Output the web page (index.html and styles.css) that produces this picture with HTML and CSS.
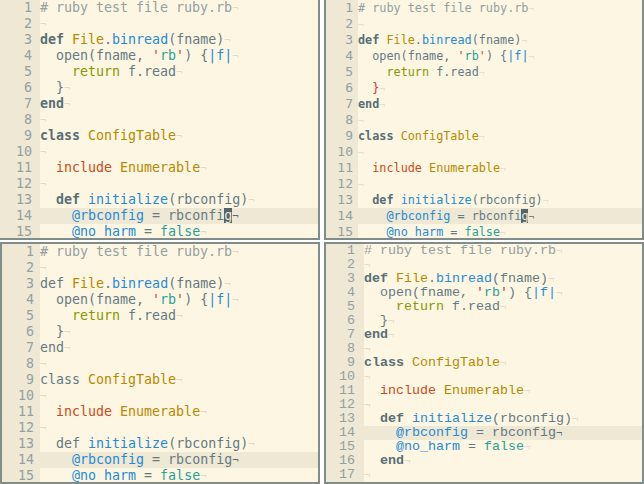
FILE: index.html
```html
<!DOCTYPE html>
<html>
<head>
<meta charset="utf-8">
<link rel="stylesheet" href="styles.css">
</head>
<body>
<div class="grid">
  <div class="pane pane-tl">
    <div class="gutter"><div>1</div><div>2</div><div>3</div><div>4</div><div>5</div><div>6</div><div>7</div><div>8</div><div>9</div><div>10</div><div>11</div><div>12</div><div>13</div><div>14</div><div>15</div></div>
    <div class="code">
      <div class="line"><span class="c"># ruby test file ruby.rb</span><span class="eol">¬</span></div>
      <div class="line"><span class="eol">¬</span></div>
      <div class="line"><span class="k">def</span> <span class="t">File</span>.<span class="f">binread</span>(fname)<span class="eol">¬</span></div>
      <div class="line">  open(fname, <span class="q">'</span><span class="s">rb</span><span class="q">'</span>) {<span class="f">|f|</span><span class="eol">¬</span></div>
      <div class="line">    <span class="r">return</span> f.read<span class="eol">¬</span></div>
      <div class="line">  }<span class="eol">¬</span></div>
      <div class="line"><span class="k">end</span><span class="eol">¬</span></div>
      <div class="line"><span class="eol">¬</span></div>
      <div class="line"><span class="k">class</span> <span class="t">ConfigTable</span><span class="eol">¬</span></div>
      <div class="line"><span class="eol">¬</span></div>
      <div class="line">  <span class="i">include</span> <span class="t">Enumerable</span><span class="eol">¬</span></div>
      <div class="line"><span class="eol">¬</span></div>
      <div class="line">  <span class="k">def</span> <span class="f">initialize</span>(rbconfig)<span class="eol">¬</span></div>
      <div class="line cur">    <span class="f">@rbconfig</span> = rbconfi<span class="cursor">g</span><span class="eol">¬</span></div>
      <div class="line">    <span class="f">@no_harm</span> = <span class="s">false</span><span class="eol">¬</span></div>
    </div>
  </div>
  <div class="pane pane-tr">
    <div class="gutter"><div>1</div><div>2</div><div>3</div><div>4</div><div>5</div><div>6</div><div>7</div><div>8</div><div>9</div><div>10</div><div>11</div><div>12</div><div>13</div><div>14</div><div>15</div></div>
    <div class="code">
      <div class="line"><span class="c"># ruby test file ruby.rb</span><span class="eol">¬</span></div>
      <div class="line"><span class="eol">¬</span></div>
      <div class="line"><span class="k">def</span> <span class="t">File</span>.<span class="f">binread</span>(fname)<span class="eol">¬</span></div>
      <div class="line">  open(fname, <span class="q">'</span><span class="s">rb</span><span class="q">'</span>) {<span class="f">|f|</span><span class="eol">¬</span></div>
      <div class="line">    <span class="r">return</span> f.read<span class="eol">¬</span></div>
      <div class="line">  <span class="q">}</span><span class="eol">¬</span></div>
      <div class="line"><span class="k">end</span><span class="eol">¬</span></div>
      <div class="line"><span class="eol">¬</span></div>
      <div class="line"><span class="k">class</span> <span class="t">ConfigTable</span><span class="eol">¬</span></div>
      <div class="line"><span class="eol">¬</span></div>
      <div class="line">  <span class="i">include</span> <span class="t">Enumerable</span><span class="eol">¬</span></div>
      <div class="line"><span class="eol">¬</span></div>
      <div class="line">  <span class="k">def</span> <span class="f">initialize</span>(rbconfig)<span class="eol">¬</span></div>
      <div class="line cur">    <span class="f">@rbconfig</span> = rbconfi<span class="cursor">g</span><span class="eol">¬</span></div>
      <div class="line">    <span class="f">@no_harm</span> = <span class="s">false</span><span class="eol">¬</span></div>
    </div>
  </div>
  <div class="pane pane-bl">
    <div class="gutter"><div>1</div><div>2</div><div>3</div><div>4</div><div>5</div><div>6</div><div>7</div><div>8</div><div>9</div><div>10</div><div>11</div><div>12</div><div>13</div><div>14</div><div>15</div></div>
    <div class="code">
      <div class="line"><span class="c"># ruby test file ruby.rb</span><span class="eol">¬</span></div>
      <div class="line"><span class="eol">¬</span></div>
      <div class="line"><span class="k">def</span> <span class="t">File</span>.<span class="f">binread</span>(fname)<span class="eol">¬</span></div>
      <div class="line">  open(fname, <span class="q">'</span><span class="s">rb</span><span class="q">'</span>) {<span class="f">|f|</span><span class="eol">¬</span></div>
      <div class="line">    <span class="r">return</span> f.read<span class="eol">¬</span></div>
      <div class="line">  }<span class="eol">¬</span></div>
      <div class="line"><span class="k">end</span><span class="eol">¬</span></div>
      <div class="line"><span class="eol">¬</span></div>
      <div class="line"><span class="k">class</span> <span class="t">ConfigTable</span><span class="eol">¬</span></div>
      <div class="line"><span class="eol">¬</span></div>
      <div class="line">  <span class="i">include</span> <span class="t">Enumerable</span><span class="eol">¬</span></div>
      <div class="line"><span class="eol">¬</span></div>
      <div class="line">  <span class="k">def</span> <span class="f">initialize</span>(rbconfig)<span class="eol">¬</span></div>
      <div class="line cur">    <span class="f">@rbconfig</span> = rbconfig<span class="eol">¬</span></div>
      <div class="line">    <span class="f">@no_harm</span> = <span class="s">false</span><span class="eol">¬</span></div>
    </div>
  </div>
  <div class="pane pane-br">
    <div class="gutter"><div>1</div><div>2</div><div>3</div><div>4</div><div>5</div><div>6</div><div>7</div><div>8</div><div>9</div><div>10</div><div>11</div><div>12</div><div>13</div><div>14</div><div>15</div><div>16</div><div>17</div></div>
    <div class="code">
      <div class="line"><span class="c"># ruby test file ruby.rb</span><span class="eol">¬</span></div>
      <div class="line"><span class="eol">¬</span></div>
      <div class="line"><span class="k">def</span> <span class="t">File</span>.<span class="f">binread</span>(fname)<span class="eol">¬</span></div>
      <div class="line">  open(fname, <span class="q">'</span><span class="s">rb</span><span class="q">'</span>) {<span class="f">|f|</span><span class="eol">¬</span></div>
      <div class="line">    <span class="r">return</span> f.read<span class="eol">¬</span></div>
      <div class="line">  }<span class="eol">¬</span></div>
      <div class="line"><span class="k">end</span><span class="eol">¬</span></div>
      <div class="line"><span class="eol">¬</span></div>
      <div class="line"><span class="k">class</span> <span class="t">ConfigTable</span><span class="eol">¬</span></div>
      <div class="line"><span class="eol">¬</span></div>
      <div class="line">  <span class="i">include</span> <span class="t">Enumerable</span><span class="eol">¬</span></div>
      <div class="line"><span class="eol">¬</span></div>
      <div class="line">  <span class="k">def</span> <span class="f">initialize</span>(rbconfig)<span class="eol">¬</span></div>
      <div class="line cur">    <span class="f">@rbconfig</span> = rbconfig<span class="eol">¬</span></div>
      <div class="line">    <span class="f">@no_harm</span> = <span class="s">false</span><span class="eol">¬</span></div>
      <div class="line">  <span class="k">end</span><span class="eol">¬</span></div>
      <div class="line"><span class="eol">¬</span></div>
    </div>
  </div>
</div>
</body>
</html>
```
FILE: styles.css
```css
html, body {
  margin: 0;
  padding: 0;
  background: #ffffff;
}
.grid {
  display: grid;
  grid-template-columns: 320px 320px;
  grid-template-rows: 240px 242px;
  column-gap: 4px;
  row-gap: 2px;
  width: 644px;
  height: 484px;
}
.pane {
  display: flex;
  overflow: hidden;
  background: #fdf6e3;
  color: #657b83;
  font-family: "DejaVu Sans Mono", monospace;
  font-size: 13.3px;
  line-height: 16px;
  border: 0 solid #818d8b;
}
.pane-tl {
  border-right-width: 2px;
  border-bottom-width: 2px;
}
.pane-tr {
  border-left-width: 2px;
  border-right-width: 2px;
  border-bottom-width: 2px;
}
.pane-bl {
  border-width: 2px;
}
.pane-br {
  border-width: 2px;
}
.gutter {
  background: #eee8d5;
  color: #93a1a1;
  text-align: right;
  flex: none;
  box-sizing: border-box;
}
.code {
  flex: 1;
  min-width: 0;
}
.line {
  height: 16px;
  white-space: pre;
}
.gutter > div {
  height: 16px;
}
.pane-tl .gutter { width: 40px; padding-right: 8px; }
.pane-bl .gutter { width: 38px; padding-right: 6px; }
.pane-tr .gutter { width: 32px; padding-right: 5px; }
.pane-tr { font-size: 11.8px; }
.pane-tr .gutter { font-size: 13px; }
.pane-br { font-family: "Liberation Mono", monospace; font-size: 13.33px; line-height: 14px; }
.pane-br .line, .pane-br .gutter > div { height: 14px; }
.pane-br .gutter { width: 38px; padding-right: 9px; }

.cur { background: #eee8d5; }
.c { color: #93a1a1; }
.k { color: #586e75; font-weight: bold; }
.pane-bl .k { font-weight: normal; color: #657b83; }
.t { color: #b58900; }
.f { color: #268bd2; }
.s { color: #2aa198; }
.q { color: #dc322f; }
.r { color: #859900; }
.i { color: #cb4b16; }
.eol { color: #e2dbc7; font-size: 0.8em; }
.cur .eol { color: #586e75; }
.cursor { background: #52646c; color: #eee8d5; }
```
